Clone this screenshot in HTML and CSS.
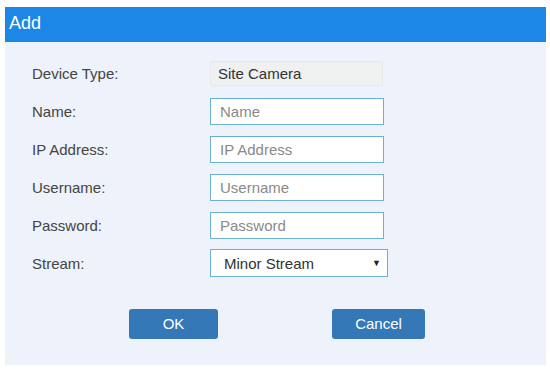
FILE: index.html
```html
<!DOCTYPE html>
<html>
<head>
<meta charset="utf-8">
<link rel="stylesheet" href="styles.css">
</head>
<body>
<div class="dialog">
  <div class="title">Add</div>
  <div class="body">
    <div class="row"><span class="label">Device Type:</span><div class="static">Site Camera</div></div>
    <div class="row"><span class="label">Name:</span><div class="input">Name</div></div>
    <div class="row"><span class="label">IP Address:</span><div class="input">IP Address</div></div>
    <div class="row"><span class="label">Username:</span><div class="input">Username</div></div>
    <div class="row"><span class="label">Password:</span><div class="input">Password</div></div>
    <div class="row"><span class="label">Stream:</span><div class="select"><span>Minor Stream</span><span class="arrow">▼</span></div></div>
    <div class="buttons">
      <div class="btn ok">OK</div>
      <div class="btn cancel">Cancel</div>
    </div>
  </div>
</div>
</body>
</html>
```
FILE: styles.css
```css
html, body { margin: 0; padding: 0; background: #ffffff; }
body { font-family: "Liberation Sans", Arial, sans-serif; padding: 7px 4px 0 5px; }
.dialog { width: 541px; height: 358px; background: #edf2fb; display: flex; flex-direction: column; }
.title { height: 35px; background: #1c87e6; color: #ffffff; font-size: 18px; line-height: 33px; padding-left: 4px; }
.body { padding: 18px 0 0 27px; display: flex; flex-direction: column; }
.row { display: flex; align-items: center; height: 26px; margin-bottom: 12px; }
.label { width: 178px; font-size: 15px; color: #444; }
.static { height: 25px; background: #eff0f0; border: 1px solid #e6e8ea; border-radius: 2px; font-size: 15px; color: #333; line-height: 24px; padding-left: 7px; box-sizing: border-box; width: 173px; }
.input { width: 174px; height: 27px; box-sizing: border-box; border: 1px solid #6cb0d6; background: #fff; font-size: 15px; color: #8a8a8a; line-height: 25px; padding-left: 9px; }
.select { width: 178px; height: 28px; box-sizing: border-box; border: 1px solid #6cb0d6; background: #fff; font-size: 15px; color: #333; display: flex; align-items: center; justify-content: space-between; padding: 0 6px 0 13px; }
.arrow { font-size: 9px; color: #222; }
.buttons { display: flex; margin-top: 21px; padding-left: 97px; }
.btn { height: 30px; background: #3478b8; border-radius: 3px; color: #fff; font-size: 15px; line-height: 30px; text-align: center; }
.ok { width: 89px; }
.cancel { width: 93px; margin-left: 114px; }
```
